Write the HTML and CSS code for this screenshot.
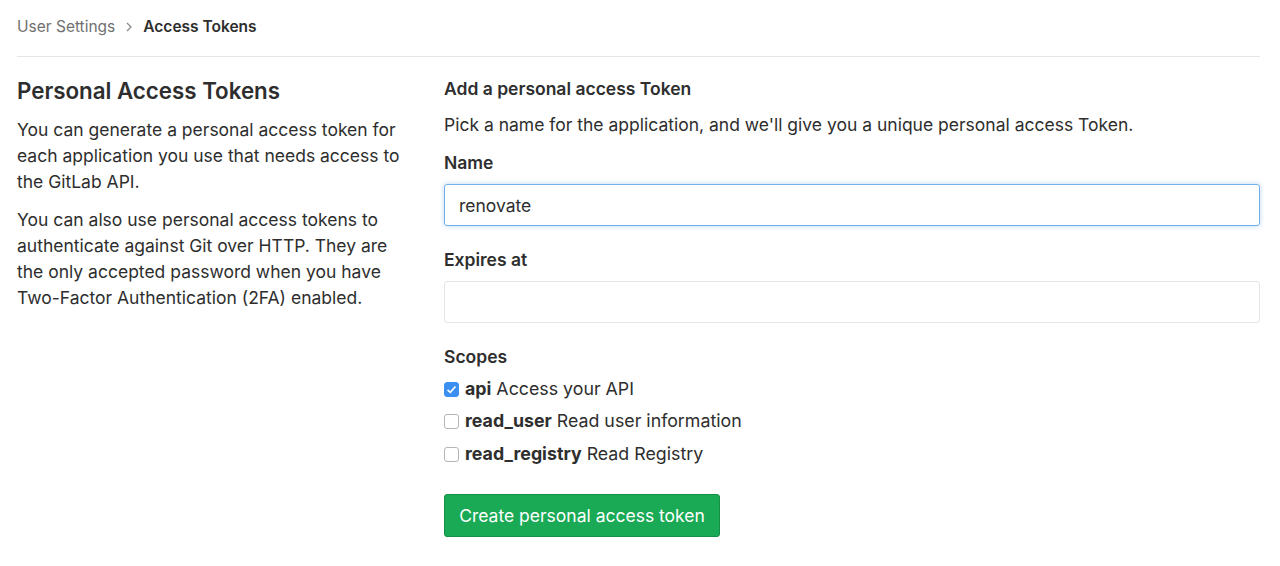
FILE: index.html
```html
<!DOCTYPE html>
<html>
<head>
<meta charset="utf-8">
<link rel="stylesheet" href="styles.css">
</head>
<body>
<div class="page">
  <nav class="breadcrumb">
    <span class="crumb">User Settings</span>
    <svg class="sep" width="8" height="12" viewBox="0 0 8 12"><path d="M2 2l4 4-4 4" fill="none" stroke="#8c8c8c" stroke-width="1.3"/></svg>
    <span class="crumb current">Access Tokens</span>
  </nav>
  <div class="row">
    <aside class="info">
      <h4 class="title">Personal Access Tokens</h4>
      <p>You can generate a personal access token for each application you use that needs access to the GitLab API.</p>
      <p>You can also use personal access tokens to authenticate against Git over HTTP. They are the only accepted password when you have Two-Factor Authentication (2FA) enabled.</p>
    </aside>
    <section class="form">
      <h5 class="form-title">Add a personal access Token</h5>
      <p class="lead">Pick a name for the application, and we'll give you a unique personal access Token.</p>
      <label class="label">Name</label>
      <div class="input focused">renovate</div>
      <label class="label">Expires at</label>
      <div class="input"></div>
      <label class="label scopes-label">Scopes</label>
      <div class="scope"><span class="cb checked"><svg width="11" height="9" viewBox="0 0 11 9"><path d="M1.5 4.8l2.8 2.6L9.5 1.5" fill="none" stroke="#fff" stroke-width="1.6"/></svg></span><b>api</b> Access your API</div>
      <div class="scope"><span class="cb"></span><b>read_user</b> Read user information</div>
      <div class="scope"><span class="cb"></span><b>read_registry</b> Read Registry</div>
      <button class="btn">Create personal access token</button>
    </section>
  </div>
</div>
</body>
</html>
```
FILE: styles.css
```css
html, body {
  margin: 0;
  padding: 0;
  background: #fff;
}
body {
  font-family: "Inter", "Liberation Sans", sans-serif;
  color: #2e2e2e;
  font-size: 17.5px;
}
.page {
  padding: 0 20px 0 17px;
}
.breadcrumb {
  height: 57px;
  display: flex;
  align-items: center;
  border-bottom: 1px solid #e5e5e5;
  font-size: 15.5px;
  padding-bottom: 3px;
  box-sizing: border-box;
}
.crumb {
  color: #707070;
}
.crumb.current {
  color: #2e2e2e;
  font-weight: 600;
}
.sep {
  margin: 0 10px 0 10px;
}
.row {
  display: flex;
  gap: 32px;
  padding-top: 19px;
}
.info {
  width: 395px;
  flex: none;
}
.title {
  margin: 0 0 11px;
  font-size: 22.3px;
  font-weight: 600;
  line-height: 30px;
}
.info p {
  margin: 0 0 12px;
  line-height: 26px;
}
.form {
  flex: 1;
}
.form-title {
  margin: 0 0 10px;
  font-size: 17.5px;
  font-weight: 600;
  line-height: 26px;
}
.lead {
  margin: 0 0 12px;
  line-height: 26px;
}
.label {
  display: block;
  font-weight: 600;
  line-height: 26px;
  margin-bottom: 8px;
}
.input {
  height: 42px;
  box-sizing: border-box;
  border: 1px solid #e5e5e5;
  border-radius: 3px;
  padding: 0 14px;
  display: flex;
  align-items: center;
  margin-bottom: 21px;
}
.input.focused {
  border-color: #73afea;
  box-shadow: 0 0 5px rgba(115, 175, 234, 0.5);
}
.scopes-label {
  margin-top: 0;
  margin-bottom: 5px;
}
.scope {
  display: flex;
  align-items: center;
  height: 26px;
  margin-bottom: 6.5px;
  font-size: 17.8px;
}
.scope b {
  font-weight: 700;
  margin-right: 5px;
}
.cb {
  width: 15px;
  height: 15px;
  box-sizing: border-box;
  border: 1px solid #b5b5b5;
  border-radius: 3px;
  margin-right: 6px;
  margin-top: 2px;
  display: flex;
  align-items: center;
  justify-content: center;
  background: #fff;
}
.cb.checked {
  background: #3b8ff0;
  border-color: #3b8ff0;
}
.btn {
  margin-top: 21.5px;
  width: 276px;
  height: 43px;
  background: #1aaa55;
  border: 1px solid #168f48;
  border-radius: 3px;
  color: #fff;
  font-family: inherit;
  font-size: 17.5px;
  padding: 0;
}
```
